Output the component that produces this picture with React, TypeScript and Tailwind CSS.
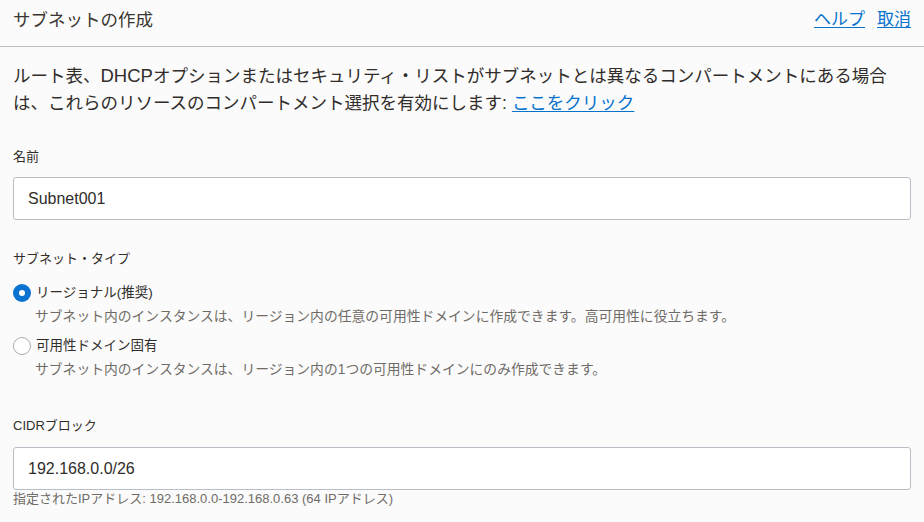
const font = "font-['Liberation_Sans','Noto_Sans_CJK_JP',sans-serif]";

const Radio = ({ checked }: { checked?: boolean }) =>
  checked ? (
    <span className="flex h-[18px] w-[18px] shrink-0 items-center justify-center rounded-full bg-[#0a72d1]">
      <span className="h-[6px] w-[6px] rounded-full bg-white" />
    </span>
  ) : (
    <span className="h-[18px] w-[18px] shrink-0 rounded-full border border-[#a7abb3] bg-white" />
  );

const options = [
  {
    label: 'リージョナル(推奨)',
    desc: 'サブネット内のインスタンスは、リージョン内の任意の可用性ドメインに作成できます。高可用性に役立ちます。',
    checked: true,
  },
  {
    label: '可用性ドメイン固有',
    desc: 'サブネット内のインスタンスは、リージョン内の1つの可用性ドメインにのみ作成できます。',
    checked: false,
  },
];

export default function App() {
  return (
    <div className={`${font} min-h-screen w-[924px] h-[522px] overflow-hidden bg-[#fbfbfb] text-[#312d2a]`}>
      {/* header */}
      <div className="flex h-[47px] items-start justify-between border-b border-[#b9bdc5] px-[13px] pt-[8px]">
        <h1 className="text-[17.5px] leading-[24px] text-[#3a3632]">サブネットの作成</h1>
        <div className="flex gap-[12px] text-[17px] leading-[24px] text-[#0572ce]">
          <a className="underline underline-offset-2">ヘルプ</a>
          <a className="underline underline-offset-2">取消</a>
        </div>
      </div>

      <div className="px-[13px]">
        <p className="mt-[16px] h-[54px] text-[17.5px] leading-[27px] whitespace-nowrap">
          ルート表、<span className="text-[18.5px] leading-none">DHCP</span>オプションまたはセキュリティ・リストがサブネットとは異なるコンパートメントにある場合
          <br />
          は、これらのリソースのコンパートメント選択を有効にします:{' '}
          <a className="text-[#0572ce] underline underline-offset-2">ここをクリック</a>
        </p>

        <label className="mt-[31px] block text-[13px] leading-[18px]">名前</label>
        <div className="mt-[11px] flex h-[43px] w-[898px] items-center rounded-[3px] border border-[#b9bdc5] bg-white px-[14px] text-[16px]">
          Subnet001
        </div>

        <div className="mt-[30px] text-[13px] leading-[18px]">サブネット・タイプ</div>
        <div className="mt-[15px] flex flex-col gap-[9px]">
          {options.map((o) => (
            <div key={o.label}>
              <div className="flex items-center gap-[5px]">
                <Radio checked={o.checked} />
                <span className="text-[13.5px] leading-[20px]">{o.label}</span>
              </div>
              <div className="mt-[4px] pl-[22px] text-[13.8px] leading-[20px] text-[#6f6b67]">{o.desc}</div>
            </div>
          ))}
        </div>

        <div className="mt-[37px] text-[13px] leading-[18px]">CIDRブロック</div>
        <div className="mt-[12px] flex h-[43px] w-[898px] items-center rounded-[3px] border border-[#b9bdc5] bg-white px-[14px] text-[16px]">
          192.168.0.0/26
        </div>
        <div className="text-[13px] leading-[17px] text-[#6f6b67]">
          指定されたIPアドレス: 192.168.0.0-192.168.0.63 (64 IPアドレス)
        </div>
      </div>
    </div>
  );
}
